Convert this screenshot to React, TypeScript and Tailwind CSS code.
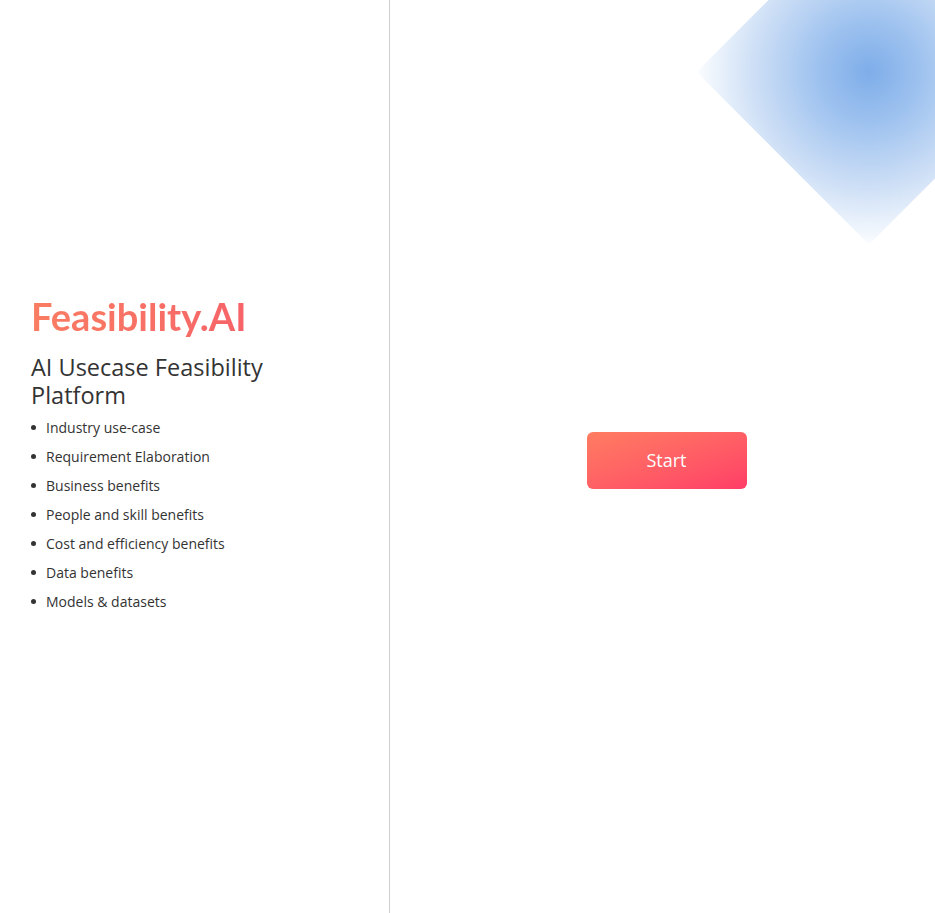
import React from "react";

const items = [
  "Industry use-case",
  "Requirement Elaboration",
  "Business benefits",
  "People and skill benefits",
  "Cost and efficiency benefits",
  "Data benefits",
  "Models & datasets",
];

export default function App() {
  return (
    <div
      className="relative flex h-[913px] w-full overflow-hidden bg-white"
      style={{ fontFamily: "'Open Sans', Lato, sans-serif" }}
    >
      <div className="flex w-[390px] shrink-0 flex-col justify-center border-r border-[#cfcfcf] pl-[31px]">
        <div className="mt-[-4px]">
          <h1
            className="bg-gradient-to-r from-[#f97d62] to-[#f4506c] bg-clip-text pb-[8px] text-[38px] font-bold leading-[36px] text-transparent"
            style={{ fontFamily: "Lato, sans-serif" }}
          >
            Feasibility.AI
          </h1>
          <h2 className="mt-[11px] max-w-[300px] text-[23.5px] leading-[28px] text-[#333]">
            AI Usecase Feasibility Platform
          </h2>
          <ul className="mt-[9px] flex flex-col gap-[10px]">
            {items.map((t) => (
              <li key={t} className="flex items-center text-[14px] leading-[19px] text-[#333]">
                <span className="mr-[10px] inline-block h-[5px] w-[5px] rounded-full bg-[#333]" />
                {t}
              </li>
            ))}
          </ul>
        </div>
      </div>
      <div className="relative flex flex-1 items-center justify-center">
        <div
          className="pointer-events-none absolute h-[244px] w-[244px] rotate-45 rounded-[4px]"
          style={{
            left: 869 - 390 - 122,
            top: 72 - 122,
            background:
              "radial-gradient(circle at 50% 50%, #7eade9 0%, #9ec2ef 30%, #cfe0f6 68%, #fbfdff 100%)",
          }}
        />
        <button className="ml-[8px] mt-[8px] h-[57px] w-[160px] rounded-[6px] bg-gradient-to-br from-[#ff7c61] to-[#ff3c67] text-[18px] text-white">
          Start
        </button>
      </div>
    </div>
  );
}
